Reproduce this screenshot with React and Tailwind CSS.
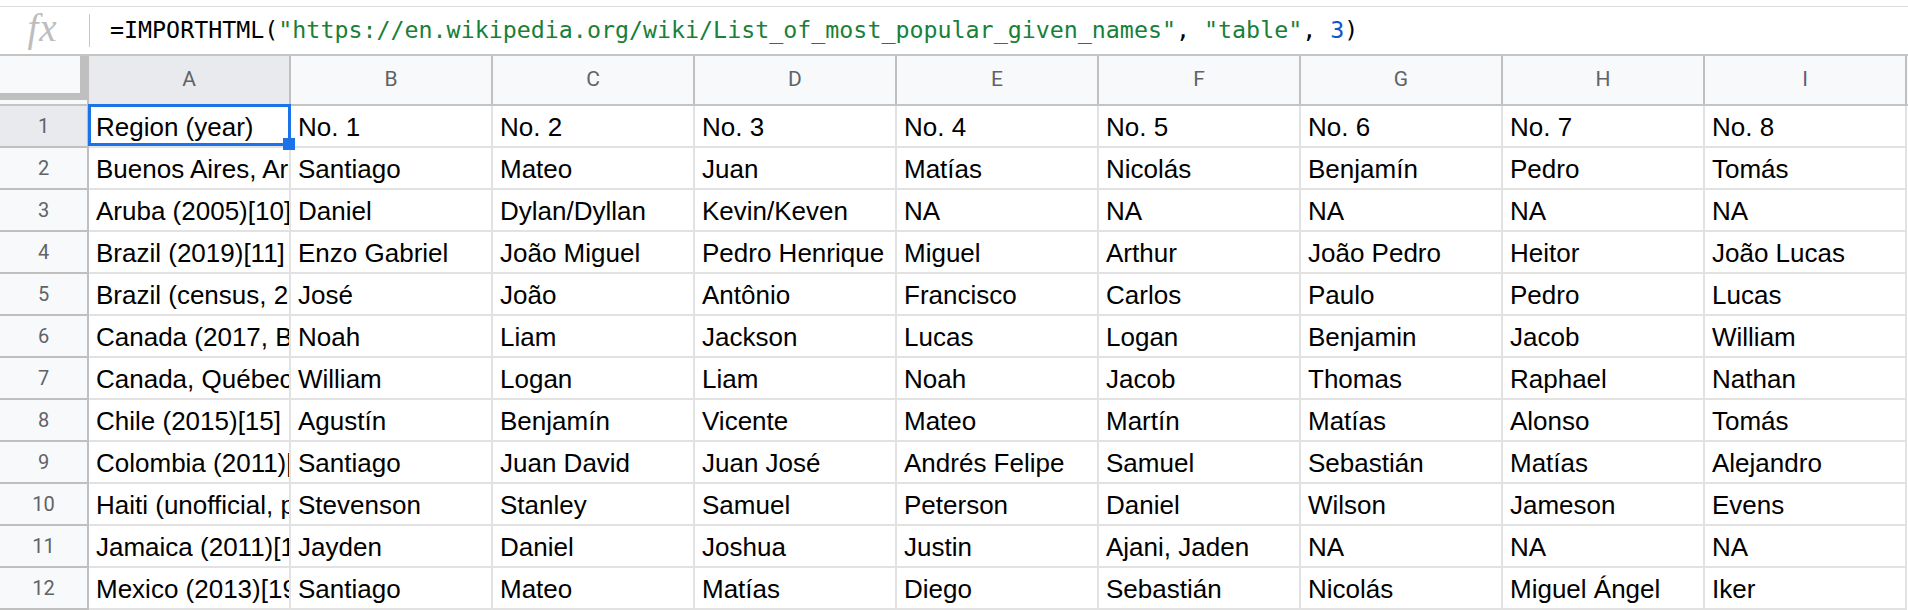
import React from "react";

const cols = ["A", "B", "C", "D", "E", "F", "G", "H", "I"];

const rows = [
  ["Region (year)", "No. 1", "No. 2", "No. 3", "No. 4", "No. 5", "No. 6", "No. 7", "No. 8"],
  ["Buenos Aires, Argentina (2017)[9]", "Santiago", "Mateo", "Juan", "Matías", "Nicolás", "Benjamín", "Pedro", "Tomás"],
  ["Aruba (2005)[10]", "Daniel", "Dylan/Dyllan", "Kevin/Keven", "NA", "NA", "NA", "NA", "NA"],
  ["Brazil (2019)[11]", "Enzo Gabriel", "João Miguel", "Pedro Henrique", "Miguel", "Arthur", "João Pedro", "Heitor", "João Lucas"],
  ["Brazil (census, 2010)[12]", "José", "João", "Antônio", "Francisco", "Carlos", "Paulo", "Pedro", "Lucas"],
  ["Canada (2017, British Columbia)[13]", "Noah", "Liam", "Jackson", "Lucas", "Logan", "Benjamin", "Jacob", "William"],
  ["Canada, Québec (2018)[14]", "William", "Logan", "Liam", "Noah", "Jacob", "Thomas", "Raphael", "Nathan"],
  ["Chile (2015)[15]", "Agustín", "Benjamín", "Vicente", "Mateo", "Martín", "Matías", "Alonso", "Tomás"],
  ["Colombia (2011)[16]", "Santiago", "Juan David", "Juan José", "Andrés Felipe", "Samuel", "Sebastián", "Matías", "Alejandro"],
  ["Haiti (unofficial, popular)[17]", "Stevenson", "Stanley", "Samuel", "Peterson", "Daniel", "Wilson", "Jameson", "Evens"],
  ["Jamaica (2011)[18]", "Jayden", "Daniel", "Joshua", "Justin", "Ajani, Jaden", "NA", "NA", "NA"],
  ["Mexico (2013)[19]", "Santiago", "Mateo", "Matías", "Diego", "Sebastián", "Nicolás", "Miguel Ángel", "Iker"],
];

export default function App() {
  return (
    <div className="w-[1908px] h-[610px] bg-white overflow-hidden">
      {/* Formula bar */}
      <div className="h-[54px] flex flex-col">
        <div className="h-[6px]" />
        <div className="h-px bg-[#dadce0]" />
        <div className="h-[47px] flex items-center">
          <div className="w-[89px] h-full flex items-center justify-center pr-[4px] pb-[6px]">
            <span
              className="italic text-[39px] leading-none text-[#bdbdbd] tracking-[1px]"
              style={{ fontFamily: '"Liberation Serif", serif' }}
            >
              fx
            </span>
          </div>
          <div className="w-px h-[33px] bg-[#c7c7c7]" />
          <div
            className="pl-[20px] pb-[1px] text-[23.3px] leading-none whitespace-nowrap text-black"
            style={{ fontFamily: '"DejaVu Sans Mono", monospace' }}
          >
            <span>=IMPORTHTML(</span>
            <span className="text-[#188038]">"https://en.wikipedia.org/wiki/List_of_most_popular_given_names"</span>
            <span>, </span>
            <span className="text-[#188038]">"table"</span>
            <span>, </span>
            <span className="text-[#1155cc]">3</span>
            <span>)</span>
          </div>
        </div>
      </div>

      {/* Column header row */}
      <div
        className="flex h-[52px] border-y-2 border-[#c4c4c4] bg-[#f8f9fa] text-[#5f6368]"
        style={{ fontFamily: 'Roboto, "Liberation Sans", sans-serif' }}
      >
        <div className="w-[89px] shrink-0 border-r-2 border-[#c0c0c0] flex flex-col">
          <div className="h-[37px] flex">
            <div className="w-[80px] bg-[#f8f9fa]" />
            <div className="w-[7px] bg-[#bfbfbf]" />
          </div>
          <div className="h-[7px] bg-[#bfbfbf]" />
          <div className="flex-1 bg-[#f8f9fa]" />
        </div>
        {cols.map((c, i) => (
          <div
            key={c}
            className={
              "w-[202px] shrink-0 border-r-2 border-[#c0c0c0] flex items-center justify-center text-[21px] " +
              (i === 0 ? "bg-[#e8eaed]" : "bg-[#f8f9fa]")
            }
          >
            {c}
          </div>
        ))}
      </div>

      {/* Data rows */}
      <div style={{ fontFamily: '"Liberation Sans", Arial, sans-serif' }}>
        {rows.map((r, ri) => (
          <div key={ri} className="flex h-[42px]">
            <div
              className={
                "w-[89px] shrink-0 h-[42px] border-r-2 border-b-2 border-[#c0c0c0] flex items-center justify-center text-[20px] text-[#5f6368] " +
                (ri === 0 ? "bg-[#e8eaed]" : "bg-[#f8f9fa]")
              }
              style={{ fontFamily: 'Roboto, "Liberation Sans", sans-serif' }}
            >
              {ri + 1}
            </div>
            {r.map((v, ci) => (
              <div
                key={ci}
                className="relative w-[202px] shrink-0 h-[42px] border-r-2 border-b-2 border-[#e2e2e2]"
              >
                <div className="h-full flex items-end pl-[7px] pb-[4px] overflow-hidden whitespace-nowrap text-[26px] leading-[30px] text-black">
                  {v}
                </div>
                {ri === 0 && ci === 0 && (
                  <>
                    <div className="absolute left-[-1px] top-[-2px] w-[203px] h-[42px] border-[3px] border-[#1a73e8] z-10 pointer-events-none" />
                    <div className="absolute left-[194px] top-[32px] w-[12px] h-[12px] bg-[#1a73e8] z-20" />
                  </>
                )}
              </div>
            ))}
          </div>
        ))}
      </div>
    </div>
  );
}
